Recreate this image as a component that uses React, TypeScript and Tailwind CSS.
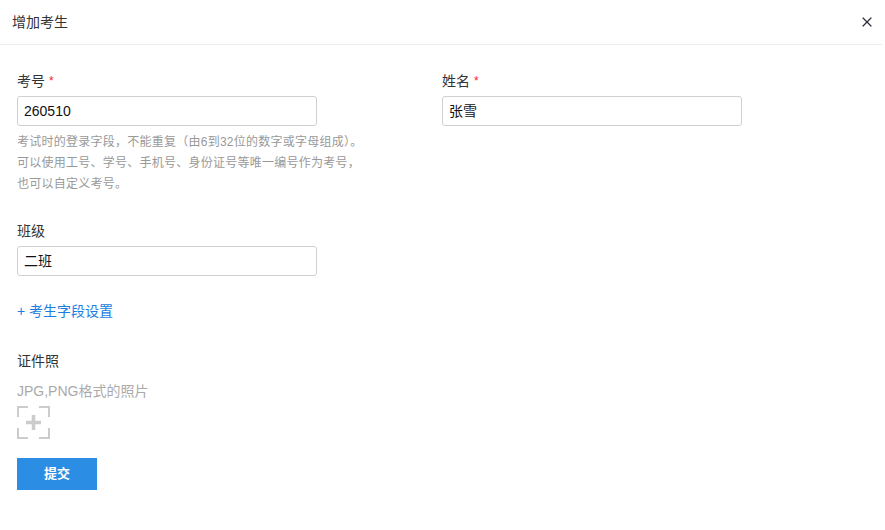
import { X } from 'lucide-react'

const font = { fontFamily: '"Liberation Sans", "Noto Sans CJK SC", sans-serif' }

function Field({ label, required, value }: { label: string; required?: boolean; value: string }) {
  return (
    <div>
      <div className="h-[20px] flex items-center text-[14px] text-[#333]">
        {label}
        {required && <span className="ml-1 text-[#f5222d] text-[12px] leading-none">*</span>}
      </div>
      <div className="mt-[5px] w-[300px] h-[30px] border border-[#d0d0d0] rounded-[3px] px-[6px] flex items-center text-[14px] text-[#111]">
        {value}
      </div>
    </div>
  )
}

// corner-bracket upload box with a plus in the middle
function UploadBox() {
  return (
    <svg width="33" height="33" viewBox="0 0 33 33" fill="none" stroke="#cccccc" strokeWidth="2">
      <path d="M1 11V1h10M22 1h10v10M32 22v10H22M11 32H1V22" />
      <path d="M16.5 9v15M9 16.5h15" strokeWidth="3.5" />
    </svg>
  )
}

export default function App() {
  return (
    <div className="w-[885px] h-[530px] bg-white" style={font}>
      <div className="h-[45px] mr-[3px] border-b border-[#ececec] flex items-center justify-between pl-[12px] pr-[7px]">
        <span className="text-[14px] text-[#333]">增加考生</span>
        <X size={16} strokeWidth={1.8} className="text-[#2c2c3c]" />
      </div>

      <div className="pl-[17px] pt-[26px]">
        <div className="flex">
          <div className="w-[425px]">
            <Field label="考号" required value="260510" />
            <div className="mt-[6px] text-[12px] leading-[21px] tracking-[0.25px] text-[#999]">
              <div>考试时的登录字段，不能重复（由6到32位的数字或字母组成）。</div>
              <div>可以使用工号、学号、手机号、身份证号等唯一编号作为考号，</div>
              <div>也可以自定义考号。</div>
            </div>
          </div>
          <Field label="姓名" required value="张雪" />
        </div>

        <div className="mt-[26px]">
          <Field label="班级" value="二班" />
        </div>

        <div className="mt-[25px] h-[20px] flex items-center text-[14px] text-[#1a7ddf]">+ 考生字段设置</div>

        <div className="mt-[30px] h-[20px] flex items-center text-[14px] text-[#333]">证件照</div>
        <div className="mt-[10px] h-[20px] flex items-center text-[14px] text-[#aaa]">JPG,PNG格式的照片</div>
        <div className="mt-[5px]">
          <UploadBox />
        </div>

        <button className="mt-[19px] w-[80px] h-[32px] bg-[#2b8de3] text-white text-[13px] font-bold">提交</button>
      </div>
    </div>
  )
}
